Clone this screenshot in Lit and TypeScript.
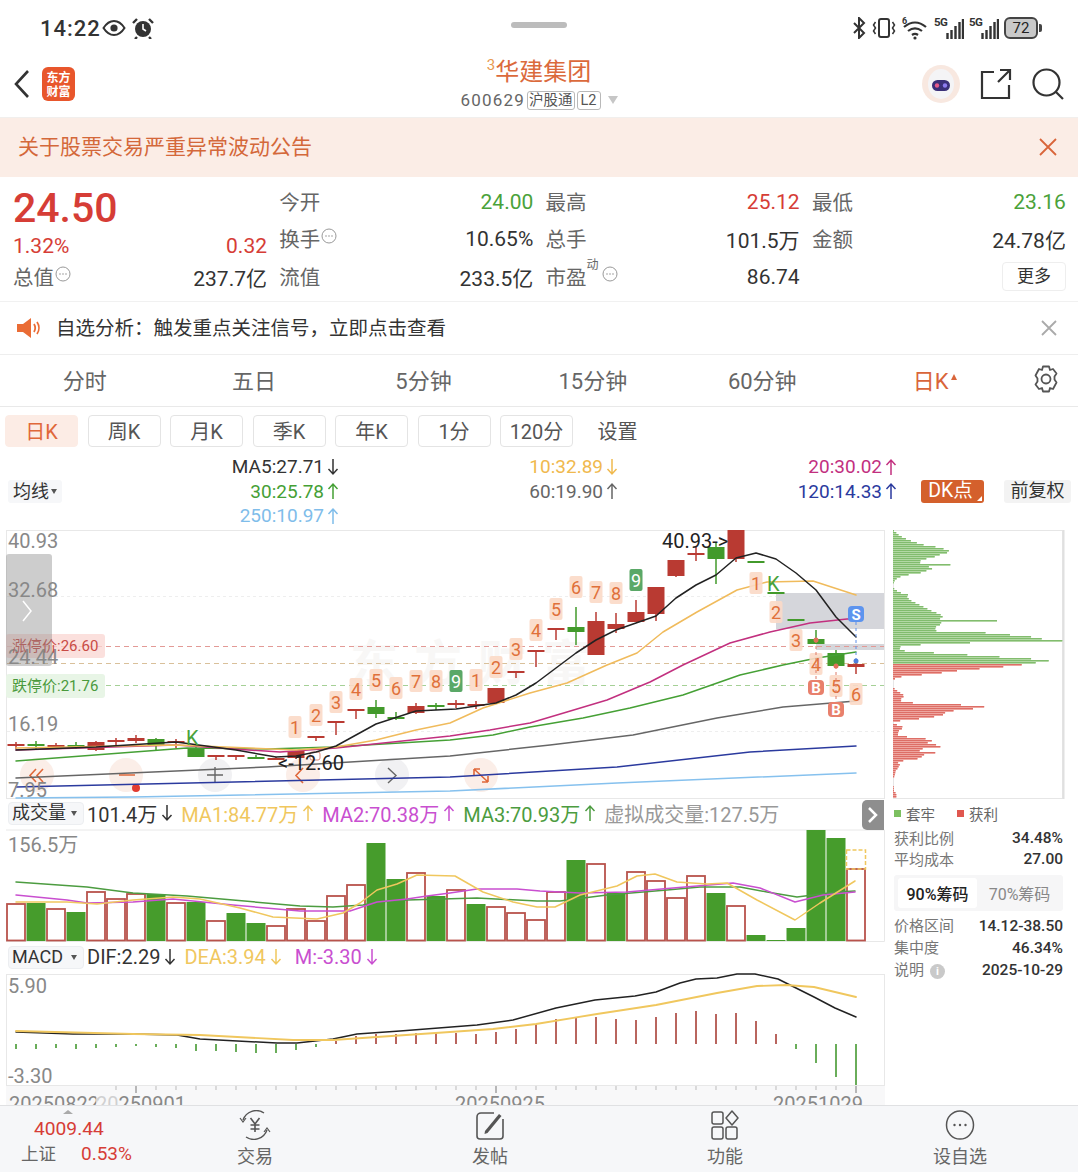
import { LitElement, html, css, svg } from 'lit';
import { customElement } from 'lit/decorators.js';

type Pt = [number, number];
const ORANGE = '#e0683a';
const barX = (i: number) => 16 + 20 * i;
const pts = (p: Pt[]) => p.map((q) => q.join(',')).join(' ');

// top, bottom, wick top, wick bottom, colour
const candles: [number, number, number, number, string][] = [
  [745, 745, 742, 749, 'r'], [745, 745, 741, 749, 'g'], [746, 746, 743, 749, 'r'], [746, 746, 742, 749, 'g'],
  [742, 750, 741, 751, 'r'], [741, 741, 738, 745, 'r'], [738, 741, 735, 743, 'r'], [739, 746, 738, 750, 'g'],
  [742, 742, 739, 748, 'r'], [748, 757, 745, 757, 'g'], [756, 756, 756, 760, 'r'], [756, 756, 756, 760, 'r'],
  [758, 758, 755, 759, 'g'], [759, 759, 757, 760, 'r'], [751, 758, 750, 759, 'r'], [737, 737, 737, 741, 'r'],
  [722, 722, 722, 735, 'r'], [710, 710, 710, 719, 'r'], [707, 714, 700, 718, 'g'], [718, 718, 712, 720, 'g'],
  [706, 713, 703, 714, 'r'], [706, 706, 703, 710, 'g'], [704, 704, 700, 708, 'r'], [705, 705, 701, 709, 'r'],
  [688, 703, 688, 703, 'r'], [672, 672, 672, 678, 'r'], [651, 651, 651, 667, 'r'], [629, 629, 629, 640, 'r'],
  [627, 632, 607, 645, 'g'], [621, 655, 612, 655, 'r'], [624, 629, 613, 633, 'r'], [612, 622, 600, 622, 'r'],
  [587, 614, 587, 621, 'r'], [560, 576, 560, 577, 'r'], [554, 554, 547, 561, 'r'], [547, 559, 543, 584, 'g'],
  [530, 559, 530, 562, 'r'], [562, 562, 562, 562, 'g'], [593, 593, 593, 593, 'g'], [620, 620, 620, 620, 'g'],
  [639, 644, 630, 644, 'g'], [653, 666, 650, 666, 'g'], [664, 667, 660, 674, 'r'],
];

const ma5: Pt[] = [[16, 750], [96, 747], [176, 742], [236, 750], [276, 757], [296, 756], [316, 752], [336, 746], [376, 724], [416, 711], [456, 709], [496, 703], [516, 695], [536, 683], [556, 668], [576, 653], [596, 640], [616, 630], [636, 623], [656, 616], [676, 598], [696, 585], [716, 575], [736, 558], [756, 553], [776, 559], [796, 573], [816, 590], [836, 617], [856, 637]];
const ma10: Pt[] = [[16, 748], [176, 745], [296, 750], [336, 747], [376, 740], [416, 730], [450, 723], [483, 708], [530, 693], [567, 683], [607, 665], [637, 653], [663, 632], [697, 612], [737, 590], [767, 582], [813, 581], [856, 595]];
const ma20: Pt[] = [[16, 750], [176, 745], [280, 752], [336, 748], [450, 736], [490, 730], [530, 723], [567, 712], [607, 700], [650, 682], [683, 665], [730, 643], [770, 632], [810, 623], [847, 619], [856, 619]];
const ma30: Pt[] = [[16, 761], [187, 748], [267, 749], [333, 747], [450, 740], [493, 735], [530, 727], [583, 718], [630, 708], [683, 695], [740, 675], [783, 665], [817, 658], [856, 652]];
const ma60: Pt[] = [[16, 778], [267, 767], [450, 756], [550, 745], [633, 735], [717, 718], [783, 707], [856, 701]];
const ma120: Pt[] = [[16, 787], [450, 777], [617, 767], [750, 752], [856, 746]];
const ma250: Pt[] = [[16, 798], [133, 797], [450, 791], [617, 783], [856, 773]];

const tags: [number, number, string][] = [
  [295, 727, '1'], [316, 715, '2'], [336, 702, '3'], [356, 689, '4'], [376, 680, '5'], [396, 688, '6'], [416, 681, '7'], [436, 681, '8'],
  [476, 680, '1'], [496, 667, '2'], [516, 649, '3'], [536, 630, '4'], [556, 609, '5'], [576, 587, '6'], [596, 592, '7'], [616, 593, '8'],
  [756, 583, '1'], [776, 612, '2'], [796, 640, '3'], [816, 664, '4'], [836, 686, '5'], [856, 694, '6'],
];

const volTops = [904, 903, 909, 912, 892, 899, 894, 894, 903, 902, 921, 913, 923, 926, 909, 921, 896, 885, 843, 879, 873, 896, 890, 904, 907, 913, 920, 892, 860, 864, 893, 872, 881, 898, 876, 893, 906, 935, 940, 928, 830, 838, 869];
const volGreen = new Set([1, 3, 7, 9, 11, 12, 18, 19, 21, 23, 28, 30, 35, 37, 38, 39, 40, 41]);
const vol1: Pt[] = [[16, 902], [67, 902], [97, 904], [133, 900], [173, 897], [200, 899], [240, 908], [273, 917], [317, 919], [343, 913], [360, 903], [377, 890], [397, 884], [417, 875], [455, 876], [483, 892], [513, 902], [537, 907], [555, 907], [580, 895], [617, 886], [637, 876], [655, 874], [677, 882], [707, 884], [727, 883], [757, 900], [795, 920], [820, 903], [855, 881]];
const vol2: Pt[] = [[16, 895], [67, 900], [87, 903], [133, 902], [173, 899], [233, 905], [300, 911], [350, 911], [377, 902], [407, 899], [427, 896], [450, 893], [477, 889], [517, 889], [540, 891], [580, 893], [627, 892], [673, 888], [733, 883], [760, 888], [795, 902], [823, 895], [855, 892]];
const vol3: Pt[] = [[16, 882], [87, 887], [133, 893], [187, 896], [233, 900], [300, 906], [333, 907], [363, 905], [377, 902], [407, 900], [477, 898], [537, 901], [560, 901], [607, 895], [667, 890], [700, 887], [740, 887], [767, 892], [797, 897], [837, 892], [855, 891]];

// macd bars, measured upward from the zero line
const macd = [-5, -5, -4, -5, -4, -3, -2, -3, -4, -7, -7, -8, -9, -9, -6, -3, 3, 8, 10, 10, 11, 11, 11, 10, 12, 15, 20, 25, 27, 27, 25, 24, 27, 31, 33, 30, 31, 23, 10, -5, -19, -33, -41];
const dif: Pt[] = [[16, 1032], [73, 1034], [133, 1034], [177, 1035], [200, 1039], [277, 1043], [297, 1043], [333, 1039], [357, 1034], [400, 1031], [477, 1025], [513, 1020], [556, 1008], [595, 1000], [635, 996], [656, 992], [680, 983], [696, 979], [717, 978], [737, 974], [755, 974], [778, 979], [794, 987], [814, 997], [835, 1008], [856, 1017]];
const dea: Pt[] = [[16, 1031], [133, 1034], [200, 1035], [293, 1040], [333, 1040], [450, 1032], [493, 1029], [536, 1024], [597, 1014], [656, 1005], [717, 993], [757, 986], [786, 985], [814, 987], [856, 997]];

// chip distribution, in 3x crop pixels
const chipCurve: Pt[] = [[15, 3], [30, 20], [42, 45], [50, 68], [58, 95], [65, 140], [72, 160], [78, 175], [85, 145], [95, 120], [100, 95], [108, 75], [122, 105], [128, 120], [135, 100], [142, 80], [148, 40], [155, 15], [165, 5], [172, 2], [180, 0], [190, 4], [200, 20], [207, 45], [215, 42], [225, 55], [235, 75], [245, 95], [255, 115], [265, 140], [272, 150], [280, 140], [292, 145], [298, 140], [305, 125], [315, 130], [320, 265], [326, 340], [332, 405], [338, 460], [348, 322], [354, 140], [360, 25], [368, 18], [375, 35], [382, 137], [388, 240], [394, 335], [400, 430], [405, 467], [410, 435], [415, 400], [420, 365], [427, 285], [433, 208], [439, 160], [445, 118], [450, 38], [456, 12], [462, 0], [485, 0], [492, 8], [500, 20], [510, 35], [516, 28], [523, 20], [530, 35], [534, 133], [540, 275], [546, 272], [552, 208], [558, 155], [565, 158], [572, 130], [578, 90], [583, 30], [590, 0], [595, 5], [602, 28], [608, 28], [615, 18], [622, 15], [630, 15], [635, 60], [640, 107], [647, 120], [652, 100], [658, 135], [663, 142], [670, 80], [675, 80], [680, 133], [686, 95], [692, 85], [697, 90], [703, 40], [709, 12], [715, 22], [720, 18], [727, 15], [735, 8], [745, 6], [755, 3], [760, 0], [795, 3], [800, 7], [806, 10], [815, 10]];
const chipSpikes: Pt[] = [[117, 172], [286, 312], [343, 508]];

function chipWidth(y: number) {
  for (const [sy, sw] of chipSpikes) if (Math.abs(sy - y) < 3) return sw;
  for (let i = 1; i < chipCurve.length; i++) {
    const [y0, w0] = chipCurve[i - 1];
    const [y1, w1] = chipCurve[i];
    if (y <= y1) return w0 + ((w1 - w0) * (y - y0)) / (y1 - y0);
  }
  return 0;
}

const line = (p: Pt[], color: string, w = 1.5) =>
  svg`<polyline points=${pts(p)} fill="none" stroke=${color} stroke-width=${w} stroke-linejoin="round" stroke-linecap="round"></polyline>`;

const arrow = (up: boolean) => html`<svg class="arrow" viewBox="0 0 12 20" width="12" height="20">
  ${up
    ? svg`<path d="M6 18V3M1.5 8L6 3l4.5 5" fill="none" stroke="currentColor" stroke-width="1.5"></path>`
    : svg`<path d="M6 2v15M1.5 12L6 17l4.5-5" fill="none" stroke="currentColor" stroke-width="1.5"></path>`}
</svg>`;

const dots = html`<svg class="dots" viewBox="0 0 16 16" width="16" height="16">
  <circle cx="8" cy="8" r="7" fill="none" stroke="#999" stroke-width="1"></circle>
  <circle cx="5" cy="8" r=".8" fill="#999"></circle><circle cx="8" cy="8" r=".8" fill="#999"></circle><circle cx="11" cy="8" r=".8" fill="#999"></circle>
</svg>`;

const signal = html`<span class="sig"><span class="sig-t">5G</span><svg viewBox="0 0 18 22" width="18" height="22">
  <path d="M1.5 21v-6M5.5 21v-9M9.5 21V8M13.5 21V4M17 21V1" stroke="#333" stroke-width="2.4" fill="none"></path></svg></span>`;

@customElement('app-root')
export class AppRoot extends LitElement {
  static styles = css`
    :host { display: block; width: 1078px; height: 1172px; overflow: hidden; background: #fff; color: #333;
      font-family: Roboto, "Noto Sans CJK SC", sans-serif; }
    svg { display: block; }
    .status { height: 60px; padding: 0 38px 4px 40px; display: flex; align-items: center; justify-content: space-between; position: relative; box-sizing: border-box; }
    .status-l, .status-r { display: flex; align-items: center; }
    .time { font-size: 22px; color: #333; letter-spacing: 1px; margin-right: 1px; font-weight: 500; }
    .status-l svg { margin-right: 6px; }
    .pill { position: absolute; left: 511px; top: 22px; width: 56px; height: 6px; background: #bcbcbc; border-radius: 3px; }
    .status-r { gap: 5px; }
    .sig { display: flex; align-items: flex-end; position: relative; width: 30px; height: 24px; justify-content: flex-end; }
    .sig-t { position: absolute; left: 0; top: -1px; font-size: 11.5px; font-weight: 700; color: #333; letter-spacing: -.5px; }
    .batt { width: 30px; height: 18px; border: 2px solid #444; border-radius: 6px; background: #c9c9c9; font-size: 15px; line-height: 18px; text-align: center; color: #222; position: relative; margin-right: 2px; }
    .batt::after { content: ""; position: absolute; right: -6px; top: 5px; width: 3px; height: 8px; background: #444; border-radius: 0 2px 2px 0; }

    .nav { height: 57px; display: flex; align-items: center; padding: 0 14px 10px; position: relative; box-sizing: border-box; }
    .logo { width: 33px; height: 34px; margin-left: 12px; border-radius: 6px; background: #e8562c; color: #fff; font-size: 12px; line-height: 14px; font-weight: 700; text-align: center; padding-top: 3px; box-sizing: border-box; font-family: "Noto Sans CJK SC", serif; }
    .title { position: absolute; left: 0; right: 0; top: 0; text-align: center; }
    .name { font-size: 24px; line-height: 28px; color: #db6a3c; margin-top: -2px; }
    .name sup { font-size: 15px; color: #e89a50; line-height: 0; vertical-align: 10px; }
    .code { display: flex; justify-content: center; align-items: center; gap: 2px; font-size: 17px; color: #666; margin-top: 3px; height: 22px; letter-spacing: 1.2px; }
    .chip { border: 1px solid #b9b9b9; border-radius: 3px; font-size: 14.5px; line-height: 17px; padding: 0 1px; color: #555; letter-spacing: 0; }
    .chip.l2 { padding: 0 3px; }
    .tri { width: 0; height: 0; border-left: 5px solid transparent; border-right: 5px solid transparent; border-top: 8px solid #c6c6c6; margin-left: 5px; }
    .nav-r { margin-left: auto; display: flex; align-items: center; }
    .nav-r svg + svg { margin-left: 20px; }

    .notice { height: 60px; background: #fbede6; border-top: 1px solid #f1efed; box-sizing: border-box; display: flex; align-items: center; justify-content: space-between; padding: 0 21px 0 18px; color: #d4683a; font-size: 21px; }
    .notice span { margin-top: -5px; }
    .notice svg { margin-top: -1px; }

    .quote { height: 125px; box-sizing: border-box; border-bottom: 1px solid #f1f1f1; display: grid; grid-template-columns: repeat(4, 254px); column-gap: 12.3px; padding: 6px 0 0 13px; font-size: 21px; }
    .col { display: flex; flex-direction: column; }
    .cell { height: 37.5px; display: flex; align-items: center; justify-content: space-between; }
    .lab { color: #666; font-size: 20.5px; display: flex; align-items: center; margin-top: -2px; }
    .lab sup { font-size: 12px; line-height: 0; margin-right: 2px; align-self: flex-start; margin-top: 4px; }
    .dots { margin-left: 1px; margin-top: -4px; }
    .price { font-size: 41px; font-weight: 500; color: #d63d36; line-height: 50px; height: 50px; }
    .cell.tight { height: 26px; }
    .cell.last { height: 36px; }
    .r { color: #d63d36; }
    .g { color: #4aa23a; }
    .more { width: 62px; height: 27px; border: 1px solid #eee; border-radius: 4px; font-size: 17px; text-align: center; line-height: 26px; color: #333; }

    .alert { height: 53px; box-sizing: border-box; border-bottom: 1px solid #eee; display: flex; align-items: center; padding: 0 21px 0 16px; font-size: 19.5px; color: #333; }
    .alert span { margin-top: -4px; }
    .alert svg:first-child { margin-right: 16px; }
    .alert svg:last-child { margin-left: auto; }

    .tabs { height: 52px; box-sizing: border-box; border-bottom: 1px solid #e9e9e9; display: flex; align-items: center; font-size: 22px; color: #666; }
    .tab { width: 169.4px; text-align: center; margin-top: -4px; }
    .tab.on { color: #d9653a; padding-left: 6px; box-sizing: border-box; display: flex; justify-content: center; align-items: center; gap: 2px; }
    .tab.on i { border-left: 3.5px solid transparent; border-right: 3.5px solid transparent; border-bottom: 6px solid #d9653a; margin-bottom: 3px; }
    .gear { margin-left: 17px; margin-top: -3px; }

    .periods { height: 48px; box-sizing: border-box; padding: 8px 0 8px 5px; display: flex; gap: 9.5px; font-size: 20px; color: #555; }
    .period { width: 73px; height: 32px; box-sizing: border-box; border: 1px solid #e4e4e4; border-radius: 4px; display: flex; align-items: center; justify-content: center; padding-bottom: 2px; }
    .period.on { background: #fcece5; border-color: #fcece5; color: #e0683a; }
    .period.plain { border: none; width: 70px; }

    .ma { height: 73px; display: flex; align-items: center; position: relative; font-size: 19px; }
    .sel { margin-left: 8px; width: 54px; height: 23px; background: #f6f7f9; border-radius: 3px; font-size: 18px; display: flex; align-items: center; justify-content: center; gap: 2px; padding-bottom: 3px; box-sizing: border-box; }
    .sel i, .select i { border-left: 3px solid transparent; border-right: 3px solid transparent; border-top: 5px solid #555; }
    .sel i { margin-top: 3px; }
    .ma-grid { width: 837px; margin: -1px 0 0 -2px; display: grid; grid-template-columns: repeat(3, 279px); grid-auto-rows: 24.5px; }
    .ma-item { display: flex; align-items: center; justify-content: flex-end; gap: 3px; white-space: nowrap; }
    .dk { margin-left: 24px; width: 63px; height: 23px; background: #d4602c; color: #fff; border-radius: 3px; font-size: 19.5px; text-align: center; line-height: 21px; position: relative; box-sizing: border-box; padding-right: 4px; }
    .dk::after { content: ""; position: absolute; right: 2px; bottom: 2px; border-left: 5px solid transparent; border-bottom: 5px solid #fff; }
    .fq { margin-left: 20px; width: 67px; height: 23px; background: #f3f3f3; border-radius: 3px; font-size: 18px; text-align: center; line-height: 22px; color: #333; }

    .charts { height: 577px; display: flex; }
    .left { width: 885px; flex: none; }
    .right { width: 193px; flex: none; }
    .head { display: flex; align-items: center; font-size: 20px; white-space: nowrap; position: relative; box-sizing: border-box; }
    .head.vol { height: 29px; padding-bottom: 3px; }
    .head.mac { height: 30px; padding-bottom: 2px; }
    .select { margin-left: 8px; width: 76px; height: 23px; box-sizing: border-box; background: #f6f7f9; border: 1px solid #eceef1; border-radius: 4px; font-size: 18px; line-height: 20px; display: flex; align-items: center; justify-content: space-between; padding: 0 6px 0 3px; margin-right: 3px; }
    .hv { display: flex; align-items: center; gap: 4px; margin-right: 8px; }
    .hv.wide { margin-right: 13px; }
    .expand { position: absolute; right: 1px; top: 0; width: 22px; height: 30px; background: #8e8e8e; border-radius: 5px 0 0 5px; }
    .expand svg { margin: 7px 0 0 5px; }
    .yl { color: #f0c75e; } .mg { color: #c94fd0; } .gn { color: #4c9c40; } .gy { color: #999; }
    .m5 { color: #333; } .m10 { color: #f0b94e; } .m20 { color: #c2307f; } .m30 { color: #45a035; } .m60 { color: #666; } .m120 { color: #2b3a9e; } .m250 { color: #7fbdea; }

    .lbl-axis { font-size: 20px; fill: #888; }
    .lbl-black { font-size: 20px; fill: #222; }
    .lbl-tag { font-size: 18px; fill: #e0703a; text-anchor: middle; }
    .lbl-tag-w { font-size: 18px; fill: #fff; text-anchor: middle; }
    .lbl-k { font-size: 20px; fill: #4aa23a; }
    .lbl-limit { font-size: 15px; }
    .lbl-bs { font-size: 15px; font-weight: 700; fill: #fff; text-anchor: middle; }
    .lbl-wm { font-size: 48px; font-weight: 700; fill: #f8f7f6; }
    .lbl-date { font-size: 20px; fill: #888; }

    .info { padding: 0 15px 0 9px; font-size: 15px; color: #777; }
    .legend { height: 27px; display: flex; align-items: center; font-size: 14.5px; color: #666; }
    .sq { width: 7px; height: 7px; margin-right: 5px; }
    .sq.a { background: #7cc060; } .sq.b { background: #e0574f; margin-left: 22px; }
    .row { height: 21px; display: flex; align-items: center; justify-content: space-between; }
    .rowg > span { margin-top: -3px; }
    .row b { font-weight: 500; font-size: 15.5px; color: #333; }
    .seg { height: 36px; background: #f6f6f7; border-radius: 3px; margin: 6px 0 4px; display: flex; padding: 3px 4px; box-sizing: border-box; font-size: 16px; }
    .seg span { display: flex; align-items: center; justify-content: center; width: 81px; color: #888; }
    .seg .on { background: #fff; border-radius: 3px; color: #222; font-weight: 500; margin-right: 3px; }
    .rowg { height: 22px; }
    .i { display: inline-flex; width: 15px; height: 15px; background: #c9c9c9; border-radius: 50%; color: #fff; font-size: 11px; align-items: center; justify-content: center; margin-left: 6px; font-weight: 700; }

    .bottom { height: 67px; box-sizing: border-box; background: #f6f7f9; border-top: 1px solid #e0e1e3; display: flex; position: relative; }
    .idx { width: 137.5px; position: relative; color: #d63d36; }
    .idx i { position: absolute; left: 63px; top: 4px; border-left: 5px solid transparent; border-right: 5px solid transparent; border-bottom: 4px solid #aaa; }
    .idx-v { position: absolute; left: 34px; top: 11px; font-size: 19.2px; line-height: 24px; }
    .idx-n { position: absolute; left: 21px; top: 36px; font-size: 17.5px; line-height: 24px; color: #666; }
    .idx-p { position: absolute; left: 81px; top: 36px; font-size: 19px; line-height: 24px; }
    .bt { width: 235px; display: flex; flex-direction: column; align-items: center; font-size: 18px; color: #666; padding-top: 4px; box-sizing: border-box; }
    .bt svg { margin-bottom: 5px; }
    .bt span { line-height: 24px; }
  `;

  private mainChart() {
    const maLines = [
      [ma250, '#86c1ee'], [ma120, '#2b3a9e'], [ma60, '#666'], [ma30, '#45a035'], [ma20, '#c2307f'], [ma10, '#f0bb5c'], [ma5, '#222'],
    ] as [Pt[], string][];
    const circles: [number, string][] = [[37, '#fbeee8'], [126, '#fbeee8'], [215, '#f1f1f3'], [303, '#fbeee8'], [392, '#f1f1f3'], [481, '#fbeee8']];
    return html`<svg width="885" height="272" viewBox="0 528 885 272">
      <rect x="6.5" y="530.5" width="878" height="268" fill="#fff" stroke="#e8e8e8"></rect>
      <text class="lbl-wm" x="350" y="680" textLength="240">东方财富</text>
      <line x1="7" x2="884" y1="596.5" y2="596.5" stroke="#eee" stroke-dasharray="3 3"></line>
      <line x1="7" x2="884" y1="731.5" y2="731.5" stroke="#eee" stroke-dasharray="3 3"></line>
      <rect x="776" y="593" width="108" height="36" fill="#d5d6db"></rect>
      <rect x="816" y="644" width="68" height="6" fill="#d5d6db"></rect>
      <line x1="7" x2="884" y1="646.5" y2="646.5" stroke="#e39a96" stroke-dasharray="5 4"></line>
      <line x1="7" x2="884" y1="663.5" y2="663.5" stroke="#d9c09a" stroke-dasharray="5 4"></line>
      <line x1="7" x2="884" y1="685.5" y2="685.5" stroke="#a5d096" stroke-dasharray="5 4"></line>
      ${circles.map(([x, c]) => svg`<circle cx=${x} cy="775" r="17" fill=${c}></circle>`)}
      <path d="M36 769l-6 6.500 6 6.500M43 769l-6 6.500 6 6.500M119 775h16M303 768l-7 7.500 7 7.500M474 769l14 13M474 769v6M474 769h6M488 782v-6M488 782h-6" fill="none" stroke="${ORANGE}" stroke-width="1.6"></path>
      <path d="M207 775h16M215 767v16M388 768l8 7.500-8 7.500" fill="none" stroke="#666" stroke-width="1.4"></path>
      <circle cx="136" cy="788" r="4" fill="#e23b30"></circle>
      ${candles.map(([t, b, wt, wb, c], i) => {
        const col = c === 'r' ? '#b93a32' : '#429a2b';
        const x = barX(i);
        return svg`<line x1=${x} x2=${x} y1=${wt} y2=${wb} stroke=${col} stroke-width="1.5"></line>
          <rect x=${x - 8.5} y=${t - (b === t ? 1 : 0)} width="17" height=${Math.max(b - t, 2)} fill=${col}></rect>`;
      })}
      <rect x="310" y="752" width="10" height="8" rx="2" fill="none" stroke="#dd8a78"></rect>
      ${maLines.map(([p, c]) => line(p, c))}
      ${tags.map(([x, y, t]) => svg`<rect x=${x - 6.5} y=${y - 11} width="13" height="22" rx="2" fill="#fbd9c7" fill-opacity=".9"></rect>
        <text class="lbl-tag" x=${x} y=${y + 6.5}>${t}</text>`)}
      ${[[456, 681], [636, 580]].map(([x, y]) => svg`<rect x=${x - 6.5} y=${y - 11} width="13" height="22" rx="2" fill="#5aa867"></rect>
        <text class="lbl-tag-w" x=${x} y=${y + 6.5}>9</text>`)}
      <text class="lbl-k" x="186" y="745">K</text>
      <text class="lbl-k" x="767" y="591">K</text>
      <line x1="816" x2="816" y1="640" y2="680" stroke="#dd7a68" stroke-dasharray="3 3"></line>
      <line x1="836" x2="836" y1="666" y2="702" stroke="#dd7a68" stroke-dasharray="3 3"></line>
      <line x1="856" x2="856" y1="622" y2="660" stroke="#5d8fe8" stroke-dasharray="3 3"></line>
      <circle cx="816" cy="640" r="2.500" fill="#e0705a"></circle>
      <circle cx="836" cy="666" r="2.500" fill="#e0705a"></circle>
      <circle cx="856" cy="661" r="2.500" fill="#4f7fdc"></circle>
      <rect x="848" y="606" width="16" height="16" rx="4" fill="#5d94ee"></rect><text class="lbl-bs" x="856" y="619.500">S</text>
      <rect x="808" y="680" width="16" height="15" rx="4" fill="#e8806c"></rect><text class="lbl-bs" x="816" y="693">B</text>
      <rect x="828" y="702" width="16" height="15" rx="4" fill="#e8806c"></rect><text class="lbl-bs" x="836" y="715">B</text>
      <text class="lbl-black" x="662" y="548">40.93-&gt;</text>
      <text class="lbl-black" x="278" y="770">&lt;-12.60</text>
      <text class="lbl-axis" x="8" y="548">40.93</text>
      <text class="lbl-axis" x="8" y="597">32.68</text>
      <text class="lbl-axis" x="8" y="731">16.19</text>
      <text class="lbl-axis" x="8" y="797">7.95</text>
      <rect x="6" y="634" width="99" height="24" rx="3" fill="#f9d5d2" fill-opacity=".75"></rect>
      <text class="lbl-axis" x="8" y="664">24.44</text>
      <text class="lbl-limit" x="12" y="651" fill="#c94b45">涨停价:26.60</text>
      <rect x="6" y="674" width="99" height="24" rx="3" fill="#e8f5e6"></rect>
      <text class="lbl-limit" x="12" y="691" fill="#4a9a3c">跌停价:21.76</text>
      <rect x="6" y="554" width="46" height="112" rx="3" fill="#888" fill-opacity=".42"></rect>
      <path d="M23 601l8 10-8 10" fill="none" stroke="#fff" stroke-width="1.5"></path>
    </svg>`;
  }

  private volumeChart() {
    return html`<svg width="885" height="114" viewBox="0 829 885 114">
      <path d="M6 830H884.500V941.500H6" fill="none" stroke="#e8e8e8"></path>
      <text class="lbl-axis" x="8" y="852">156.5万</text>
      ${volTops.map((t, i) => {
        const x = barX(i) - 9.5;
        return volGreen.has(i)
          ? svg`<rect x=${x} y=${t} width="19" height=${941 - t} fill="#469c2c"></rect>`
          : svg`<rect x=${x + 0.5} y=${t} width="18" height=${940.5 - t} fill="#fff" stroke="#b8534c" stroke-width="1.8"></rect>`;
      })}
      <rect x="846.500" y="850" width="19" height="19" fill="none" stroke="#f0c75e" stroke-width="1.5" stroke-dasharray="4 2"></rect>
      ${line(vol3, '#4c9c40')}${line(vol2, '#c94fd0')}${line(vol1, '#f0c75e')}
    </svg>`;
  }

  private macdChart() {
    const major = (i: number) => i === 6 || i === 24 || i === 42;
    return html`<svg width="885" height="132" viewBox="0 973 885 132">
      <rect x="6.500" y="974.500" width="878" height="111" fill="#fff" stroke="#e8e8e8"></rect>
      <rect x="6" y="1086" width="879" height="19" fill="#f8f8f9"></rect>
      <text class="lbl-axis" x="8" y="993">5.90</text>
      <text class="lbl-axis" x="8" y="1083">-3.30</text>
      ${macd.map((m, i) => svg`<line x1=${barX(i)} x2=${barX(i)} y1="1044" y2=${1044 - m} stroke=${m > 0 ? '#b9655e' : '#6aad5a'} stroke-width="2"></line>`)}
      ${line(dif, '#222')}${line(dea, '#f0c75e', 1.8)}
      ${candles.map((_, i) => (i < 5 ? '' : svg`<line x1=${barX(i)} x2=${barX(i)} y1="1086" y2=${major(i) ? 1093 : 1090} stroke=${major(i) ? '#777' : '#bbb'}></line>`))}
      <text class="lbl-date" x="9" y="1111">20250822</text>
      <text class="lbl-date" x="96" y="1111">20250901</text>
      <rect x="96" y="1095" width="22" height="10" fill="#f8f8f9" fill-opacity=".65"></rect>
      <text class="lbl-date" x="455" y="1111">20250925</text>
      <text class="lbl-date" x="773" y="1111">20251029</text>
    </svg>`;
  }

  private chipChart() {
    const rows: unknown[] = [];
    for (let y = 15; y < 815; y += 6) {
      const w = chipWidth(y) / 3;
      if (w < 0.5) continue;
      const ry = 525 + y / 3;
      const up = y >= 412;
      rows.push(svg`<rect x="893" y=${ry} width=${w} height="2" fill=${up ? '#f0aca6' : '#b8dcab'}></rect>
        <rect x="893" y=${ry} width=${w} height="1.1" fill=${up ? '#dd6e66' : '#82bc6e'}></rect>`);
    }
    return html`<svg width="193" height="272" viewBox="885 528 193 272">
      <rect x="893.500" y="530.500" width="169" height="268" fill="#fff" stroke="#e6e6e6"></rect>
      <line x1="1063.500" x2="1063.500" y1="530" y2="799" stroke="#e0e0e0" stroke-width="2"></line>
      ${rows}
    </svg>`;
  }

  render() {
    return html`
      <div class="status">
        <div class="status-l">
          <span class="time">14:22</span>
          <svg viewBox="0 0 24 18" width="24" height="18"><path d="M1.500 9C5 3.500 8 2 12 2s7 1.500 10.500 7C19 14.500 16 16 12 16S5 14.500 1.500 9z" fill="none" stroke="#333" stroke-width="2"></path><circle cx="12" cy="9" r="3.600" fill="#333"></circle></svg>
          <svg viewBox="0 0 22 22" width="22" height="22"><circle cx="11" cy="12" r="8" fill="#333"></circle><path d="M11 7v5l3 2" stroke="#fff" stroke-width="1.600" fill="none"></path><path d="M1 6l4-4M21 6l-4-4M5 20l-2 2M17 20l2 2" stroke="#333" stroke-width="2.400"></path></svg>
        </div>
        <div class="pill"></div>
        <div class="status-r">
          <svg viewBox="0 0 16 22" width="16" height="22"><path d="M3 6l10 10-5 5V1l5 5L3 16" fill="none" stroke="#333" stroke-width="2"></path></svg>
          <svg viewBox="0 0 24 22" width="24" height="22"><rect x="7" y="2" width="10" height="18" rx="2" fill="none" stroke="#333" stroke-width="2"></rect><path d="M3.500 5L1.500 8l2 3-2 3 2 3M20.500 5l2 3-2 3 2 3-2 3" fill="none" stroke="#333" stroke-width="1.500"></path></svg>
          <svg viewBox="0 0 28 24" width="28" height="24"><path d="M3 11c7-6 15-6 22 0M7 15c4.500-3.500 9.500-3.500 14 0M11 19c2-1.500 4-1.500 6 0" fill="none" stroke="#333" stroke-width="2.200"></path><circle cx="14" cy="22" r="1.600" fill="#333"></circle><text x="1" y="8" font-size="9" font-weight="700" fill="#333">6</text></svg>
          ${signal}${signal}
          <div class="batt">72</div>
        </div>
      </div>

      <div class="nav">
        <svg viewBox="0 0 16 28" width="16" height="28"><path d="M14 1L2 14l12 13" fill="none" stroke="#333" stroke-width="2.600"></path></svg>
        <div class="logo">东方<br />财富</div>
        <div class="title">
          <div class="name"><sup>3</sup>华建集团</div>
          <div class="code">600629<span class="chip">沪股通</span><span class="chip l2">L2</span><span class="tri"></span></div>
        </div>
        <div class="nav-r">
          <svg viewBox="0 0 38 38" width="38" height="38"><circle cx="19" cy="19" r="19" fill="#f8e8e0"></circle><ellipse cx="19" cy="19" rx="13" ry="15" fill="#f4f4f6"></ellipse><rect x="10" y="15" width="18" height="11" rx="5.500" fill="#3a2f78"></rect><circle cx="15" cy="20.500" r="2.200" fill="#e45a8a"></circle><circle cx="23" cy="20.500" r="2.200" fill="#8e7cf0"></circle></svg>
          <svg viewBox="0 0 32 32" width="32" height="32"><path d="M14 4H2v26h27V17M18 14L30 2M20 2h10v10" fill="none" stroke="#333" stroke-width="2.200"></path></svg>
          <svg viewBox="0 0 32 32" width="32" height="32"><circle cx="14.500" cy="14.500" r="13" fill="none" stroke="#333" stroke-width="2.200"></circle><path d="M24 24l7 7" stroke="#333" stroke-width="2.200"></path></svg>
        </div>
      </div>

      <div class="notice">
        <span>关于股票交易严重异常波动公告</span>
        <svg viewBox="0 0 18 18" width="18" height="18"><path d="M1 1l16 16M17 1L1 17" stroke="#d9653a" stroke-width="1.800"></path></svg>
      </div>

      <div class="quote">
        <div class="col">
          <div class="price">24.50</div>
          <div class="cell tight r"><span>1.32%</span><span>0.32</span></div>
          <div class="cell last"><span class="lab">总值${dots}</span><span>237.7亿</span></div>
        </div>
        <div class="col">
          <div class="cell"><span class="lab">今开</span><span class="g">24.00</span></div>
          <div class="cell"><span class="lab">换手${dots}</span><span>10.65%</span></div>
          <div class="cell"><span class="lab">流值</span><span>233.5亿</span></div>
        </div>
        <div class="col">
          <div class="cell"><span class="lab">最高</span><span class="r">25.12</span></div>
          <div class="cell"><span class="lab">总手</span><span>101.5万</span></div>
          <div class="cell"><span class="lab">市盈<sup>动</sup>${dots}</span><span>86.74</span></div>
        </div>
        <div class="col">
          <div class="cell"><span class="lab">最低</span><span class="g">23.16</span></div>
          <div class="cell"><span class="lab">金额</span><span>24.78亿</span></div>
          <div class="cell"><span></span><span class="more">更多</span></div>
        </div>
      </div>

      <div class="alert">
        <svg viewBox="0 0 24 22" width="24" height="22"><path d="M1 7h6l8-6v20l-8-6H1z" fill="#ea6c35"></path><path d="M18 7c1.500 2.500 1.500 5.500 0 8M21 5c2.500 3.500 2.500 8.500 0 12" fill="none" stroke="#ea6c35" stroke-width="1.800"></path></svg>
        <span>自选分析：触发重点关注信号，立即点击查看</span>
        <svg viewBox="0 0 16 16" width="16" height="16"><path d="M1 1l14 14M15 1L1 15" stroke="#aaa" stroke-width="1.800"></path></svg>
      </div>

      <div class="tabs">
        ${['分时', '五日', '5分钟', '15分钟', '60分钟'].map((t) => html`<div class="tab">${t}</div>`)}
        <div class="tab on">日K<i></i></div>
        <svg class="gear" viewBox="0 0 26 28" width="26" height="28"><path d="M10 1.500h6l1 3.500 3-1 3.500 4.500-2 3v3l2 3L20 24l-3-1-1 3.500h-6L9 23l-3 1-3.500-4.500 2-3v-3l-2-3L6 4l3 1z" fill="none" stroke="#555" stroke-width="1.800" stroke-linejoin="round"></path><circle cx="13" cy="14" r="4.500" fill="none" stroke="#555" stroke-width="1.800"></circle></svg>
      </div>

      <div class="periods">
        <div class="period on">日K</div>
        ${['周K', '月K', '季K', '年K', '1分', '120分'].map((t) => html`<div class="period">${t}</div>`)}
        <div class="period plain">设置</div>
      </div>

      <div class="ma">
        <div class="sel">均线<i></i></div>
        <div class="ma-grid">
          <div class="ma-item m5">MA5:27.71${arrow(false)}</div>
          <div class="ma-item m10">10:32.89${arrow(false)}</div>
          <div class="ma-item m20">20:30.02${arrow(true)}</div>
          <div class="ma-item m30">30:25.78${arrow(true)}</div>
          <div class="ma-item m60">60:19.90${arrow(true)}</div>
          <div class="ma-item m120">120:14.33${arrow(true)}</div>
          <div class="ma-item m250">250:10.97${arrow(true)}</div>
        </div>
        <div class="dk">DK点</div>
        <div class="fq">前复权</div>
      </div>

      <div class="charts">
        <div class="left">
          ${this.mainChart()}
          <div class="head vol">
            <div class="select">成交量<i></i></div>
            <div class="hv">101.4万${arrow(false)}</div>
            <div class="hv yl">MA1:84.77万${arrow(true)}</div>
            <div class="hv mg">MA2:70.38万${arrow(true)}</div>
            <div class="hv gn">MA3:70.93万${arrow(true)}</div>
            <div class="gy">虚拟成交量:127.5万</div>
            <div class="expand"><svg viewBox="0 0 12 16" width="12" height="16"><path d="M2 1l7 7-7 7" fill="none" stroke="#fff" stroke-width="2.500"></path></svg></div>
          </div>
          ${this.volumeChart()}
          <div class="head mac">
            <div class="select">MACD<i></i></div>
            <div class="hv">DIF:2.29${arrow(false)}</div>
            <div class="hv yl wide">DEA:3.94${arrow(false)}</div>
            <div class="hv mg">M:-3.30${arrow(false)}</div>
          </div>
          ${this.macdChart()}
        </div>
        <div class="right">
          ${this.chipChart()}
          <div class="info">
            <div class="legend"><span class="sq a"></span>套牢<span class="sq b"></span>获利</div>
            <div class="row"><span>获利比例</span><b>34.48%</b></div>
            <div class="row"><span>平均成本</span><b>27.00</b></div>
            <div class="seg"><span class="on">90%筹码</span><span>70%筹码</span></div>
            <div class="row rowg"><span>价格区间</span><b>14.12-38.50</b></div>
            <div class="row rowg"><span>集中度</span><b>46.34%</b></div>
            <div class="row rowg"><span>说明<span class="i">i</span></span><b>2025-10-29</b></div>
          </div>
        </div>
      </div>

      <div class="bottom">
        <div class="idx">
          <i></i>
          <div class="idx-v">4009.44</div>
          <div class="idx-n">上证</div>
          <div class="idx-p">0.53%</div>
        </div>
        <div class="bt">
          <svg viewBox="0 0 34 30" width="34" height="30"><path d="M5 10a14 14 0 0 1 21-7M29 20a14 14 0 0 1-21 7" fill="none" stroke="#555" stroke-width="1.400"></path><path d="M2 8l3 4 3-4M32 22l-3-4-3 4" fill="none" stroke="#555" stroke-width="1.200"></path><path d="M12.500 8l4.500 6 4.500-6M17 14v8M12.500 15h9M12.500 19h9" fill="none" stroke="#555" stroke-width="1.600"></path></svg>
          <span>交易</span>
        </div>
        <div class="bt">
          <svg viewBox="0 0 30 30" width="30" height="30"><path d="M19 3H6a4 4 0 0 0-4 4v19a3 3 0 0 0 3 3h20a3 3 0 0 0 3-3V9" fill="none" stroke="#555" stroke-width="1.600"></path><path d="M10 21L24 4l2.500 2-14 17-3 1z" fill="#555"></path></svg>
          <span>发帖</span>
        </div>
        <div class="bt">
          <svg viewBox="0 0 28 30" width="28" height="30"><g fill="none" stroke="#555" stroke-width="1.500"><rect x="1" y="2" width="11" height="12" rx="2"></rect><path d="M21 1l6 7-6 7-6-7z" stroke-linejoin="round"></path><rect x="1" y="17" width="11" height="12" rx="2"></rect><rect x="15" y="17" width="11" height="12" rx="2"></rect></g></svg>
          <span>功能</span>
        </div>
        <div class="bt">
          <svg viewBox="0 0 30 30" width="30" height="30"><ellipse cx="15" cy="15" rx="13.500" ry="14" fill="none" stroke="#555" stroke-width="1.500"></ellipse><circle cx="9.500" cy="15" r="1.200" fill="#555"></circle><circle cx="15" cy="15" r="1.200" fill="#555"></circle><circle cx="20.500" cy="15" r="1.200" fill="#555"></circle></svg>
          <span>设自选</span>
        </div>
      </div>
    `;
  }
}
